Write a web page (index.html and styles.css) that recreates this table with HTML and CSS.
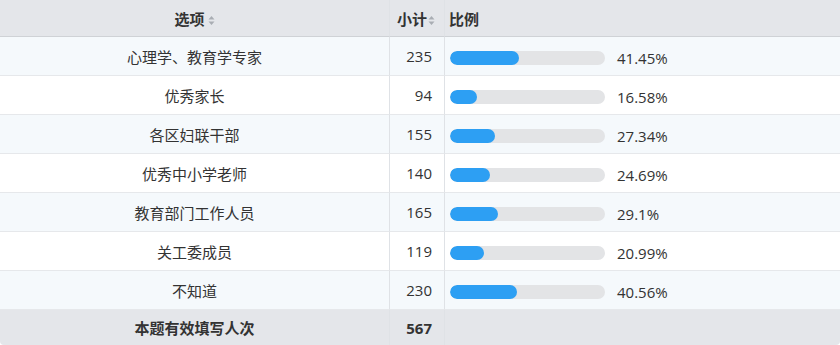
FILE: index.html
```html
<!DOCTYPE html>
<html lang="zh-CN">
<head>
<meta charset="utf-8">
<link rel="stylesheet" href="styles.css">
</head>
<body>
<table class="stats">
  <colgroup>
    <col class="c-opt"><col class="c-num"><col class="c-pct">
  </colgroup>
  <thead>
    <tr>
      <th class="th-opt">选项<svg class="sort" width="7" height="11" viewBox="0 0 7 11"><path d="M3.5 1 L6.5 4.5 H0.5 Z M3.5 10 L6.5 6.5 H0.5 Z" fill="#a9adb3"/></svg></th>
      <th class="th-num">小计<svg class="sort" width="7" height="11" viewBox="0 0 7 11"><path d="M3.5 1 L6.5 4.5 H0.5 Z M3.5 10 L6.5 6.5 H0.5 Z" fill="#a9adb3"/></svg></th>
      <th class="th-pct">比例</th>
    </tr>
  </thead>
  <tbody>
    <tr><td class="opt">心理学、教育学专家</td><td class="num">235</td><td class="pct"><div class="pbar"><span class="track"><span class="fill" style="width:69px"></span></span><span class="val">41.45%</span></div></td></tr>
    <tr><td class="opt">优秀家长</td><td class="num">94</td><td class="pct"><div class="pbar"><span class="track"><span class="fill" style="width:27px"></span></span><span class="val">16.58%</span></div></td></tr>
    <tr><td class="opt">各区妇联干部</td><td class="num">155</td><td class="pct"><div class="pbar"><span class="track"><span class="fill" style="width:45px"></span></span><span class="val">27.34%</span></div></td></tr>
    <tr><td class="opt">优秀中小学老师</td><td class="num">140</td><td class="pct"><div class="pbar"><span class="track"><span class="fill" style="width:40px"></span></span><span class="val">24.69%</span></div></td></tr>
    <tr><td class="opt">教育部门工作人员</td><td class="num">165</td><td class="pct"><div class="pbar"><span class="track"><span class="fill" style="width:48px"></span></span><span class="val">29.1%</span></div></td></tr>
    <tr><td class="opt">关工委成员</td><td class="num">119</td><td class="pct"><div class="pbar"><span class="track"><span class="fill" style="width:34px"></span></span><span class="val">20.99%</span></div></td></tr>
    <tr><td class="opt">不知道</td><td class="num">230</td><td class="pct"><div class="pbar"><span class="track"><span class="fill" style="width:67px"></span></span><span class="val">40.56%</span></div></td></tr>
  </tbody>
  <tfoot>
    <tr><td class="opt">本题有效填写人次</td><td class="num">567</td><td class="pct"></td></tr>
  </tfoot>
</table>
</body>
</html>
```

FILE: styles.css
```css
html, body {
  margin: 0;
  padding: 0;
  background: #ffffff;
}
body {
  font-family: "Open Sans", "Noto Sans CJK SC", sans-serif;
  font-size: 15px;
  color: #333333;
}
.stats {
  width: 840px;
  border-collapse: separate;
  border-spacing: 0;
  table-layout: fixed;
  border-radius: 0 0 4px 4px;
  overflow: hidden;
}
.c-opt { width: 390px; }
.c-num { width: 55px; }
.stats th, .stats td {
  padding: 0;
  border-right: 1px solid #dfe2e6;
  border-bottom: 1px solid #e6e8eb;
}
.stats th:last-child, .stats td:last-child { border-right: none; }
.stats thead th {
  height: 36px;
  background: #e4e6ea;
  font-weight: bold;
  border-bottom: 1px solid #cfd2d6;
  font-family: "Noto Sans CJK SC", sans-serif;
  font-size: 15px;
  color: #333;
}
.th-opt { text-align: center; }
.th-num { text-align: center; padding-right: 2px !important; }
.th-pct { text-align: left; padding-left: 4px !important; }
.sort {
  margin-left: 3px;
  vertical-align: -1px;
}
.th-num .sort { margin-left: 1px; }
.stats tbody td { height: 38px; }
.stats tbody tr:nth-child(odd) td { background: #f5f9fc; }
.stats tbody tr:nth-child(even) td { background: #ffffff; }
.opt { text-align: center; }
.num { text-align: right; padding-right: 12px !important; }
.pct { padding-left: 5px !important; }
.pbar {
  display: flex;
  align-items: center;
  gap: 12px;
  padding-top: 3px;
}
.track {
  display: block;
  width: 155px;
  height: 14px;
  border-radius: 7px;
  background: #e3e4e6;
  overflow: hidden;
}
.fill {
  display: block;
  height: 100%;
  border-radius: 7px;
  background: #2d9ff3;
}
.val { color: #333; }
.stats tfoot td {
  height: 35px;
  background: #e4e6ea;
  font-weight: bold;
  border-bottom: none;
}
```
